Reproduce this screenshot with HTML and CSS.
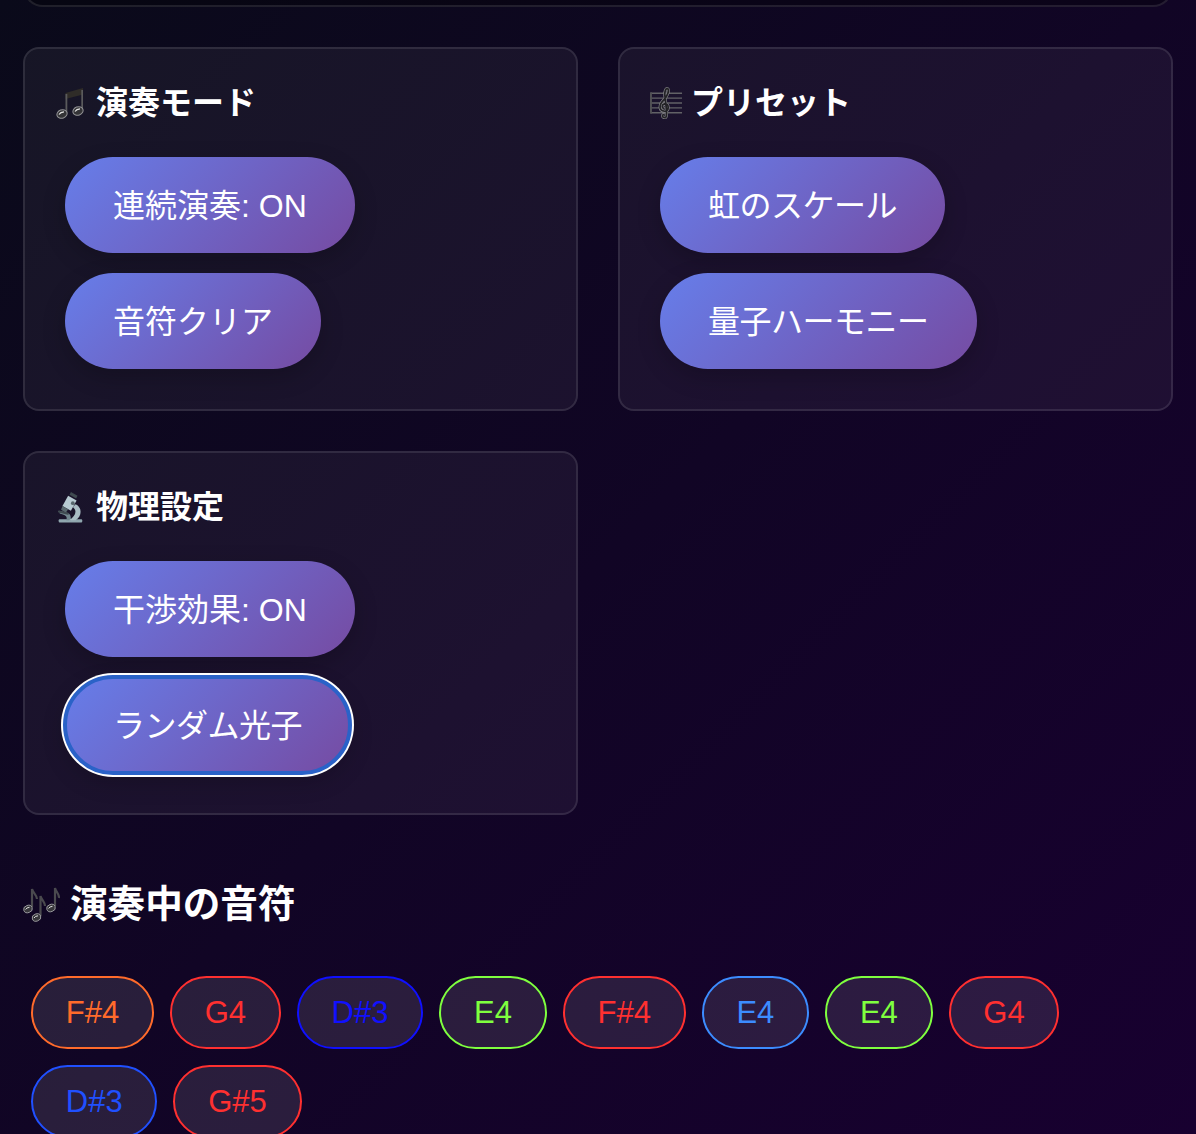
FILE: index.html
```html
<!DOCTYPE html>
<html lang="ja">
<head>
  <meta charset="UTF-8" />
  <meta name="viewport" content="width=device-width, initial-scale=1.0"/>
  <title>量子音楽</title>
  <link rel="stylesheet" href="styles.css">
</head>
<body>

  <div class="stage-edge"></div>

  <div class="panels">
    <section class="panel">
      <h3>
        <svg class="icon" viewBox="0 0 28 32">
          <path d="M9.500 6 L27 1 V7.500 L9.500 12 Z" fill="#2f2c28"/>
          <path d="M9.500 7 H11.300 V26 H9.500 Z M25.300 3 H27 V23 H25.300 Z" fill="#5a5a5c"/>
          <ellipse cx="6" cy="27" rx="5.200" ry="4.200" fill="#333336" stroke="#939396" stroke-width="1" transform="rotate(-20 6 27)"/>
          <ellipse cx="22" cy="24" rx="5.200" ry="4.200" fill="#333336" stroke="#939396" stroke-width="1" transform="rotate(-20 22 24)"/>
          <path d="M3 27.500 Q4.500 25 8 24.800 M19 24.500 Q20.500 22 24 21.800" fill="none" stroke="#e4e4e4" stroke-width="1.200"/>
        </svg>
        演奏モード
      </h3>
      <div class="buttons">
        <button>連続演奏: ON</button>
        <button>音符クリア</button>
      </div>
    </section>

    <section class="panel">
      <h3>
        <svg class="icon icon-wide" viewBox="0 0 34 32">
          <path d="M1 6 H33 M1 11 H33 M1 16 H33 M1 21 H33 M1 26 H33" fill="none" stroke="#626266" stroke-width="1.400"/>
          <path d="M1 5 V27" stroke="#505054" stroke-width="2"/>
          <path d="M16 31 C12 32 12 27 15 28 M16 31 C18 30 17 22 15.500 10 C14.500 5 16 1 18 1 C20 2 19 8 14 13 C9 18 9 24 15 24.500 C20 24 20 17 15 17 C12 17.500 12 21 14.500 22" fill="none" stroke="#8a8a8e" stroke-width="3"/>
          <path d="M16 31 C12 32 12 27 15 28 M16 31 C18 30 17 22 15.500 10 C14.500 5 16 1 18 1 C20 2 19 8 14 13 C9 18 9 24 15 24.500 C20 24 20 17 15 17 C12 17.500 12 21 14.500 22" fill="none" stroke="#232326" stroke-width="1.800"/>
        </svg>
        プリセット
      </h3>
      <div class="buttons">
        <button class="kana">虹のスケール</button>
        <button class="kana">量子ハーモニー</button>
      </div>
    </section>

    <section class="panel">
      <h3>
        <svg class="icon" viewBox="0 0 28 34">
          <rect x="2" y="30" width="25" height="3.500" rx="1" fill="#8fa6ae"/>
          <path d="M10 31 C12 27 8 25 3 24 L3 21 L11 23 C15 24 15 28 15 31 Z" fill="#71868e"/>
          <path d="M20 14 C27 17 27 27 20 31 H13 C20 27 22 21 17 17 Z" fill="#a9bcc4"/>
          <path d="M12 5 L21 10 L15 21 L6 16 Z" fill="#b7cad2"/>
          <path d="M15 1 L22 5 L20.500 8 L13.500 4 Z" fill="#3f4a50"/>
          <path d="M6 16 L12 19.500 L9.500 23 L4.500 20 Z" fill="#59686e"/>
          <circle cx="17" cy="13" r="2" fill="#56666c"/>
          <rect x="1" y="22" width="12" height="2" rx="1" fill="#3f4a50" transform="rotate(14 7 23)"/>
        </svg>
        物理設定
      </h3>
      <div class="buttons">
        <button>干渉効果: ON</button>
        <button class="focused kana">ランダム光子</button>
      </div>
    </section>
  </div>

  <section class="notes">
    <h2>
      <svg class="icon-large" viewBox="0 0 37 36">
        <path d="M9 21 V3 C10 7 14 9 14 13 M17.500 30 V10 C18.500 14 22 16 22 20 M32 20 V2 C33 6 36.500 8 36 12" fill="none" stroke="#4a4a4e" stroke-width="2.200"/>
        <g fill="#38383c" stroke="#9a9a9e" stroke-width=".9">
          <ellipse cx="5" cy="23" rx="4.400" ry="3.600" transform="rotate(-20 5 23)"/>
          <ellipse cx="13.500" cy="31.500" rx="4.400" ry="3.600" transform="rotate(-20 13.500 31.500)"/>
          <ellipse cx="28" cy="22" rx="4.400" ry="3.600" transform="rotate(-20 28 22)"/>
        </g>
        <path d="M2.600 23.500 Q3.600 21.500 6.500 21.300 M11 32 Q12 30 15 29.800 M25.600 22.500 Q26.600 20.500 29.500 20.300" fill="none" stroke="#e0e0e0" stroke-width="1"/>
      </svg>
      演奏中の音符
    </h2>
    <div class="note-list">
      <span class="note orange">F#4</span>
      <span class="note red">G4</span>
      <span class="note indigo">D#3</span>
      <span class="note green">E4</span>
      <span class="note red">F#4</span>
      <span class="note sky">E4</span>
      <span class="note green">E4</span>
      <span class="note red">G4</span>
      <span class="note blue">D#3</span>
      <span class="note red">G#5</span>
    </div>
  </section>

</body>
</html>
```

FILE: styles.css
```css
* {
  box-sizing: border-box;
  margin: 0;
  padding: 0;
}

html, body {
  height: 1134px;
  overflow: hidden;
}

body {
  font-family: "Liberation Sans", "Noto Sans CJK JP", sans-serif;
  background: linear-gradient(135deg, #0a0a1a 0%, #180030 100%);
  color: #fff;
  padding: 0 23px;
}

/* bottom of the stage, scrolled almost out of view */
.stage-edge {
  height: 47px;
  margin: -40px 0 40px;
  background: rgba(0, 0, 0, 0.3);
  border: 2px solid rgba(255, 255, 255, 0.1);
  border-radius: 20px;
}

.panels {
  display: grid;
  grid-template-columns: 1fr 1fr;
  gap: 40px;
}

.panel {
  background: rgba(255, 255, 255, 0.05);
  border: 2px solid rgba(255, 255, 255, 0.1);
  border-radius: 16px;
  padding: 31px;
  height: 364px;
}

h3 {
  display: flex;
  align-items: center;
  font-size: 32px;
  line-height: 46px;
  font-weight: bold;
  margin-bottom: 31px;
}

.icon {
  height: 32px;
  width: 40px;
  padding-right: 12px;
}

.icon-wide {
  width: 41px;
  margin-left: -1px;
  padding-right: 8px;
}

.buttons {
  display: flex;
  flex-direction: column;
  align-items: flex-start;
  gap: 20px;
  padding-left: 9px;
}

button {
  height: 96px;
  padding: 0 48px 4px;
  font-family: inherit;
  font-size: 32px;
  color: #fff;
  border: none;
  border-radius: 48px;
  background: linear-gradient(135deg, #667eea 0%, #764ba2 100%);
  box-shadow: 0 8px 24px rgba(0, 0, 0, 0.2);
}

button.kana {
  letter-spacing: -0.5px;
}

button.focused {
  outline: 4px solid #2a62c8;
  outline-offset: -2px;
  box-shadow: 0 0 0 4px #fff, 0 8px 24px rgba(0, 0, 0, 0.2);
}

.notes {
  margin-top: 40px;
}

h2 {
  display: flex;
  align-items: center;
  font-size: 37.6px;
  line-height: 58px;
  font-weight: bold;
  margin-top: 60px;
  margin-bottom: 43px;
}

.icon-large {
  width: 47px;
  height: 36px;
  padding-right: 10px;
}

.note-list {
  display: flex;
  flex-wrap: wrap;
  gap: 16px;
  padding: 0 8px;
}

.note {
  height: 73px;
  line-height: 69px;
  padding: 0 32.78px;
  font-size: 31px;
  background: rgba(255, 255, 255, 0.1);
  border: 2px solid currentColor;
  border-radius: 37px;
}

.orange { color: #ff6b2b; }
.red { color: #ff3030; }
.indigo { color: #1010ff; }
.green { color: #7fff3f; }
.sky { color: #3c8cff; }
.blue { color: #2050ff; }
```
